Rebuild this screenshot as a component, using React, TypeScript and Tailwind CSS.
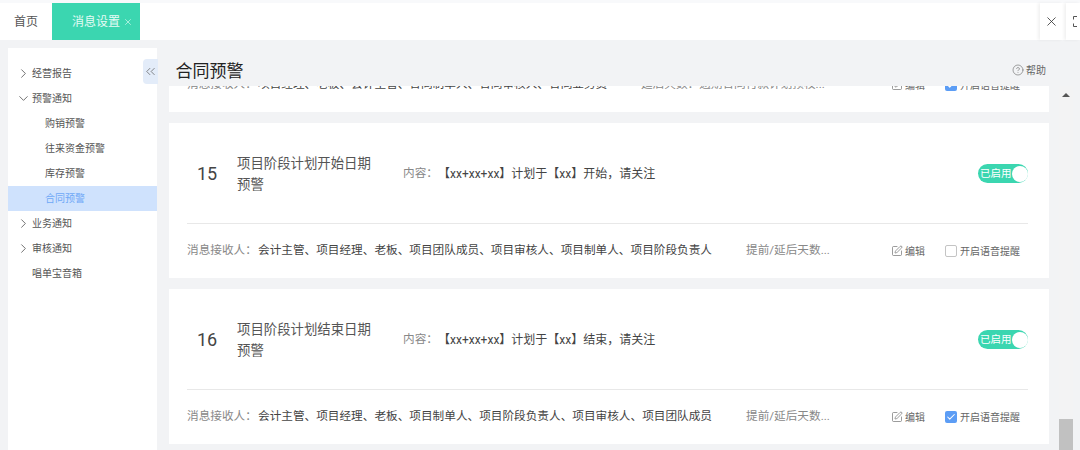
import React from "react";
import { ChevronRight, ChevronDown, ChevronsLeft, X, CircleHelp, SquarePen, Check } from "lucide-react";

const FONT = "font-['Roboto','Noto_Sans_CJK_SC',sans-serif]";

function MenuRow({ label, icon, active, sub }: { label: string; icon?: "r" | "d"; active?: boolean; sub?: boolean }) {
  return (
    <div className={`h-[25px] flex items-center text-[10px] ${active ? "bg-[#cfe2fd] text-[#6ea8f7]" : "text-[#555]"} ${sub ? "pl-[37px]" : "pl-[8px]"}`}>
      {icon === "r" && <ChevronRight size={15} strokeWidth={1.2} className="text-[#444] mr-[1px]" />}
      {icon === "d" && <ChevronDown size={15} strokeWidth={1.2} className="text-[#444] mr-[1px]" />}
      {!icon && !sub && <span className="w-[16px]" />}
      <span>{label}</span>
    </div>
  );
}

function Footer({ people, extra, checked, peopleW }: { people: string; extra: string; checked: boolean; peopleW: string }) {
  return (
    <div className="h-[54px] ml-[18px] mr-[21px] flex items-center text-[11.65px]">
      <span className="text-[#888] w-[71px] shrink-0 whitespace-nowrap">消息接收人：</span>
      <span className={`text-[#444] ${peopleW} shrink-0 whitespace-nowrap`}>{people}</span>
      <span className="text-[#888] flex-1 min-w-0 whitespace-nowrap">{extra}</span>
      <span className="flex items-center text-[#666] text-[10px] w-[54px] shrink-0">
        <SquarePen size={12} strokeWidth={1.3} className="mr-[2px]" />编辑
      </span>
      <span className="flex items-center text-[#666] text-[10px] whitespace-nowrap mr-[8px]">
        {checked ? (
          <span className="w-[12px] h-[12px] rounded-[2px] bg-[#5c9df5] mr-[3px] flex items-center justify-center">
            <Check size={10} strokeWidth={2.5} className="text-white" />
          </span>
        ) : (
          <span className="w-[12px] h-[12px] rounded-[2px] border border-[#c4c4c4] bg-white mr-[3px]" />
        )}
        开启语音提醒
      </span>
    </div>
  );
}

function Card({ no, title, verb, people, checked }: { no: number; title: string; verb: string; people: string; checked: boolean }) {
  return (
    <div className="bg-white h-[155px] shrink-0 flex flex-col">
      <div className="h-[101px] ml-[18px] mr-[21px] pt-[1px] border-b border-[#e8e8e8] flex items-center">
        <span className="w-[50px] pl-[10px] text-[18px] text-[#444] shrink-0">{no}</span>
        <span className="w-[166px] pr-[26px] shrink-0 text-[13.4px] leading-[21px] text-[#555]">{title}</span>
        <span className="text-[11.65px] text-[#888] w-[35px] shrink-0 whitespace-nowrap">内容：</span>
        <span className="text-[12px] text-[#444] flex-1 whitespace-nowrap">{`【xx+xx+xx】计划于【xx】${verb}，请关注`}</span>
        <span className="w-[50px] h-[19px] rounded-full bg-[#3bd6b0] flex items-center justify-between pl-[2px] pr-[1.5px] text-[10.5px] text-white whitespace-nowrap shrink-0">
          <span>已启用</span>
          <span className="w-[16px] h-[16px] rounded-full bg-white shrink-0" />
        </span>
      </div>
      <Footer people={people} extra="提前/延后天数..." checked={checked} peopleW="w-[488px]" />
    </div>
  );
}

export default function App() {
  return (
    <div className={`${FONT} w-[1080px] h-[450px] overflow-hidden bg-[#f2f3f5] flex flex-col`}>
      <div className="h-[3px] bg-[#f8f9fb] shrink-0" />
      <div className="h-[37px] bg-white shrink-0 flex items-stretch">
        <div className="w-[52px] flex items-center justify-center text-[12px] text-[#555]">首页</div>
        <div className="w-[88px] bg-[#3bd6b0] flex items-center justify-end pr-[7px] text-[12px] text-[#e6fbf5]">
          消息设置
          <X size={10} strokeWidth={1.5} className="ml-[3px] mt-[1px]" />
        </div>
        <div className="flex-1" />
        <div className="w-[23px] mr-[3px] flex items-center justify-center bg-white shadow-[-2px_0_3px_rgba(0,0,0,0.06)]">
          <X size={15} strokeWidth={1.3} className="text-[#333]" />
        </div>
        <div className="w-[14px] flex items-center pl-[7px] bg-white shadow-[-2px_0_3px_rgba(0,0,0,0.06)]">
          <svg width="7" height="11" viewBox="0 0 7 11" fill="none" stroke="#555" strokeWidth="1">
            <path d="M4 .5H.5v3M.5 7.5v3H4" />
          </svg>
        </div>
      </div>
      <div className="flex-1 flex min-h-0 pt-[8px]">
        <div className="w-[149px] ml-[8px] bg-white relative shrink-0 pt-[13px]">
          <button className="absolute right-[-1px] top-[11px] w-[15px] h-[25px] bg-[#e3ecf9] rounded-l-[4px] flex items-center justify-center">
            <ChevronsLeft size={15} strokeWidth={1.1} className="text-[#555]" />
          </button>
          <MenuRow label="经营报告" icon="r" />
          <MenuRow label="预警通知" icon="d" />
          <MenuRow label="购销预警" sub />
          <MenuRow label="往来资金预警" sub />
          <MenuRow label="库存预警" sub />
          <MenuRow label="合同预警" sub active />
          <MenuRow label="业务通知" icon="r" />
          <MenuRow label="审核通知" icon="r" />
          <MenuRow label="唱单宝音箱" />
        </div>
        <div className="flex-1 min-w-0 flex flex-col pl-[12px]">
          <div className="h-[38px] shrink-0 flex items-center justify-between w-[880px] pl-[7px]">
            <span className="text-[17px] leading-[22px] text-[#222] mt-[8px] ml-[-0.5px]">合同预警</span>
            <span className="flex items-center text-[10px] text-[#666] mt-[6px] mr-[3px]">
              <CircleHelp size={12} strokeWidth={1.2} className="mr-[2px]" />帮助
            </span>
          </div>
          <div className="flex-1 min-h-0 flex">
            <div className="w-[880px] overflow-hidden flex flex-col gap-[11px] shrink-0">
              <div className="bg-white h-[26px] shrink-0">
                <div className="mt-[-28px]">
                  <Footer people="项目经理、老板、会计主管、合同制单人、合同审核人、合同业务员" extra="延后天数：逾期合同付款计划预校..." checked peopleW="w-[383px]" />
                </div>
              </div>
              <Card no={15} title="项目阶段计划开始日期预警" verb="开始" people="会计主管、项目经理、老板、项目团队成员、项目审核人、项目制单人、项目阶段负责人" checked={false} />
              <Card no={16} title="项目阶段计划结束日期预警" verb="结束" people="会计主管、项目经理、老板、项目制单人、项目阶段负责人、项目审核人、项目团队成员" checked />
            </div>
            <div className="w-[14px] ml-[10px] shrink-0 bg-[#f3f3f4] flex flex-col justify-between">
              <div className="flex justify-center pt-[7px]">
                <div className="w-0 h-0 border-l-[4px] border-r-[4px] border-b-[4px] border-l-transparent border-r-transparent border-b-[#555]" />
              </div>
              <div className="h-[31px] bg-[#c1c1c1]" />
            </div>
          </div>
        </div>
      </div>
    </div>
  );
}
